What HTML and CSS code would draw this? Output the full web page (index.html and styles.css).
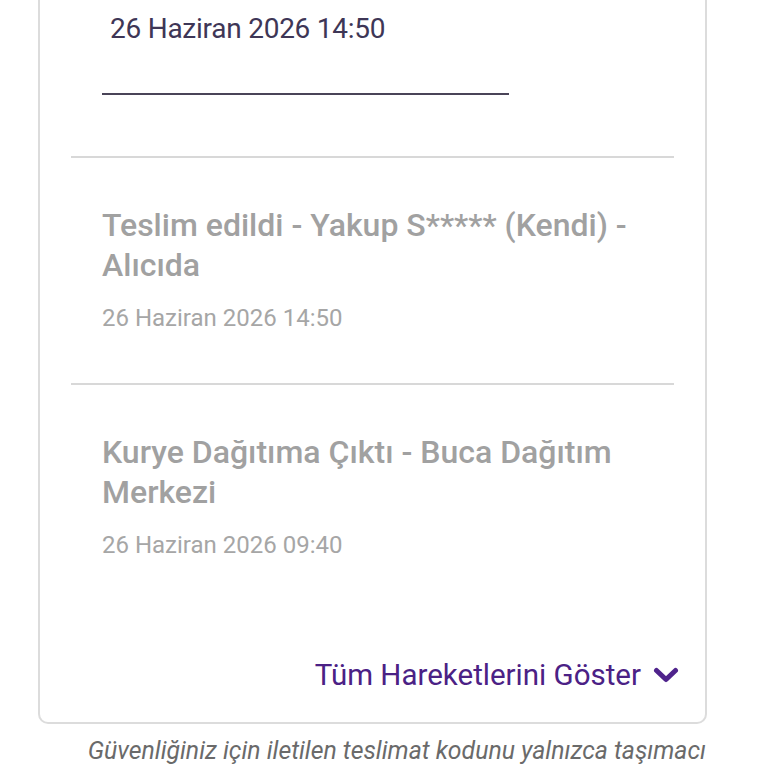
FILE: index.html
```html
<!DOCTYPE html>
<html lang="tr">
<head>
<meta charset="utf-8">
<link rel="stylesheet" href="styles.css">
</head>
<body>
<div class="card">
  <div class="head">
    <div class="head-date">26 Haziran 2026 14:50</div>
    <div class="head-line"></div>
  </div>
  <div class="divider"></div>
  <div class="item">
    <div class="item-title">Teslim edildi - Yakup S***** (Kendi) - Alıcıda</div>
    <div class="item-date">26 Haziran 2026 14:50</div>
  </div>
  <div class="divider"></div>
  <div class="item item-last">
    <div class="item-title">Kurye Dağıtıma Çıktı - Buca Dağıtım Merkezi</div>
    <div class="item-date">26 Haziran 2026 09:40</div>
  </div>
  <div class="more">
    <span class="more-text">Tüm Hareketlerini Göster</span>
    <svg class="chev" width="26" height="17" viewBox="0 0 26 17"><path d="M3.5 3.5 L13 12.5 L22.5 3.5" fill="none" stroke="#4f238c" stroke-width="5" stroke-linecap="round" stroke-linejoin="round"/></svg>
  </div>
</div>
<p class="note">Güvenliğiniz için iletilen teslimat kodunu yalnızca taşımacı</p>
</body>
</html>
```
FILE: styles.css
```css
html, body {
  margin: 0;
  padding: 0;
  background: #ffffff;
}
body {
  font-family: Roboto, "Noto Sans", "Liberation Sans", sans-serif;
  width: 768px;
  height: 768px;
  overflow: hidden;
}
.card {
  margin-left: 38px;
  width: 665px;
  border: 2px solid #dcdcdc;
  border-top: none;
  border-radius: 0 0 10px 10px;
  padding-bottom: 29px;
}
.head {
  box-sizing: border-box;
  padding: 12px 0 0 62px;
  height: 156px;
}
.head-date {
  padding-left: 8px;
  font-size: 28px;
  line-height: 34px;
  color: #3e3656;
  letter-spacing: -0.25px;
}
.head-line {
  margin-top: 47px;
  width: 407px;
  height: 2px;
  background: #4a4458;
}
.divider {
  margin: 0 31px;
  height: 2px;
  background: #d8d8d8;
}
.item {
  padding: 47px 30px 50px 62px;
}
.item-last {
  padding-bottom: 0;
}
.item-title {
  font-size: 32px;
  font-weight: 500;
  line-height: 40px;
  color: #a1a1a1;
}
.item-date {
  margin-top: 18px;
  font-size: 24px;
  line-height: 30px;
  color: #a6a6a6;
}
.more {
  margin-top: 97px;
  display: flex;
  justify-content: flex-end;
  align-items: center;
  gap: 12px;
  padding-right: 26px;
  height: 36px;
}
.more-text {
  font-size: 29.5px;
  line-height: 36px;
  color: #4b2185;
}
.chev {
  display: block;
  margin-top: 1px;
}
.note {
  margin: 12px 0 0 0;
  padding-right: 62px;
  text-align: right;
  font-style: italic;
  font-size: 24.8px;
  line-height: 30px;
  color: #6a6a6a;
  white-space: nowrap;
}
```
